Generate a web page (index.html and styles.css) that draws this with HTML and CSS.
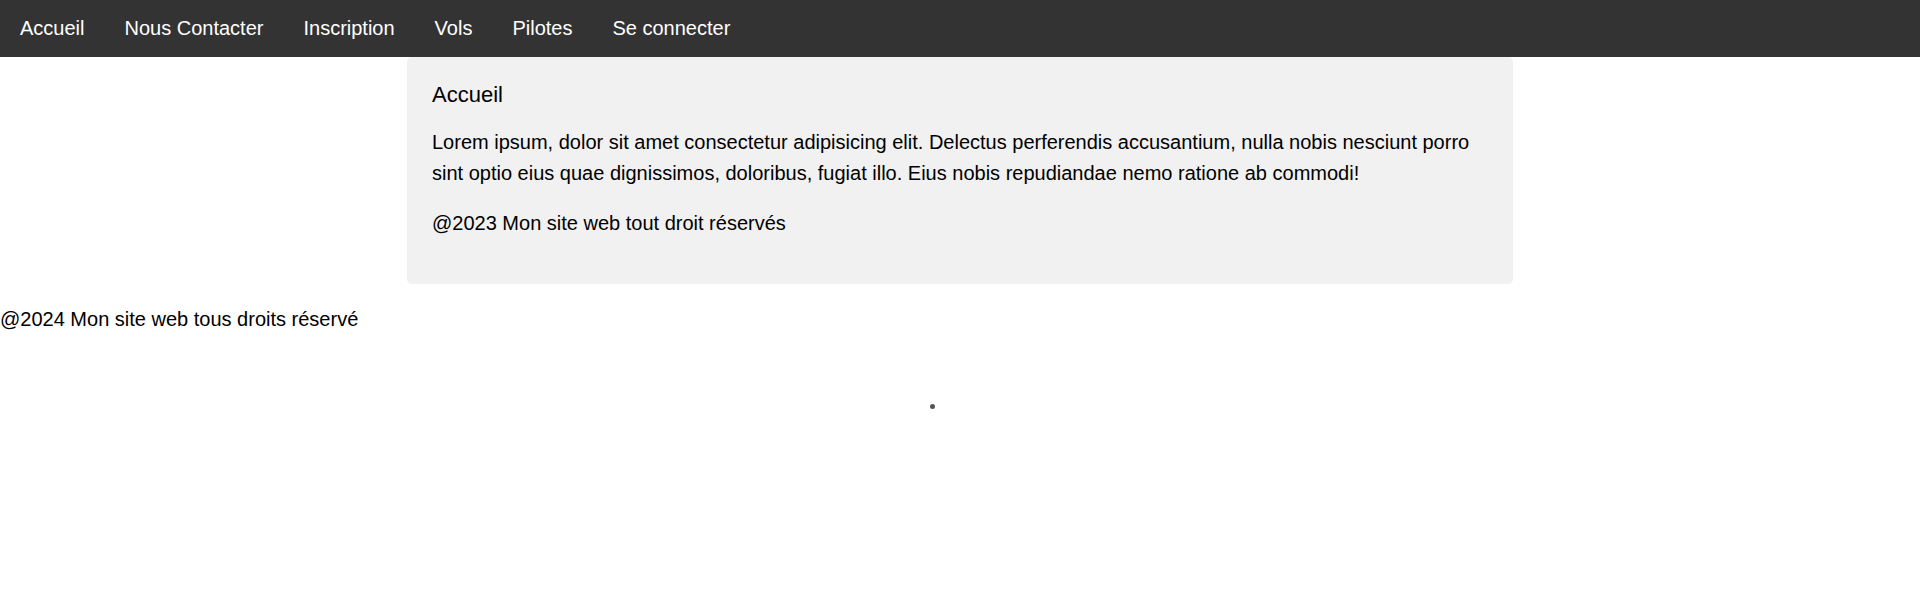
FILE: index.html
```html
<!DOCTYPE html>
<html lang="fr">
<head>
<meta charset="utf-8">
<title>Accueil</title>
<link rel="stylesheet" href="styles.css">
</head>
<body>
<nav class="topnav">
  <a href="#">Accueil</a>
  <a href="#">Nous Contacter</a>
  <a href="#">Inscription</a>
  <a href="#">Vols</a>
  <a href="#">Pilotes</a>
  <a href="#">Se connecter</a>
</nav>
<main class="card">
  <h2 class="card-title">Accueil</h2>
  <p class="card-text">Lorem ipsum, dolor sit amet consectetur adipisicing elit. Delectus perferendis accusantium, nulla nobis nesciunt porro sint optio eius quae dignissimos, doloribus, fugiat illo. Eius nobis repudiandae nemo ratione ab commodi!</p>
  <p class="card-text">@2023 Mon site web tout droit réservés</p>
</main>
<footer class="site-footer">
  <p>@2024 Mon site web tous droits réservé</p>
</footer>
<span class="dot"></span>
</body>
</html>
```

FILE: styles.css
```css
html, body {
  margin: 0;
  padding: 0;
}

body {
  font-family: "Liberation Sans", Arial, sans-serif;
  font-size: 20px;
  color: #000;
  background: #fff;
  position: relative;
  min-height: 590px;
}

.topnav {
  display: flex;
  background: #333333;
}

.topnav a {
  color: #fff;
  text-decoration: none;
  font-size: 20px;
  line-height: 23px;
  padding: 17px 20px;
}

.card {
  display: block;
  box-sizing: border-box;
  width: 1106px;
  margin: 0 auto;
  padding: 25px;
  background: #f1f1f1;
  border-radius: 5px;
}

.card-title {
  margin: 0 0 20px;
  font-size: 22px;
  font-weight: normal;
  line-height: 25px;
}

.card-text {
  margin: 20px 0;
  line-height: 30.6px;
}

.site-footer p {
  margin: 20px 0;
  line-height: 30.6px;
}

.dot {
  position: absolute;
  left: 930px;
  top: 404px;
  width: 5px;
  height: 5px;
  border-radius: 50%;
  background: #555;
}
```
